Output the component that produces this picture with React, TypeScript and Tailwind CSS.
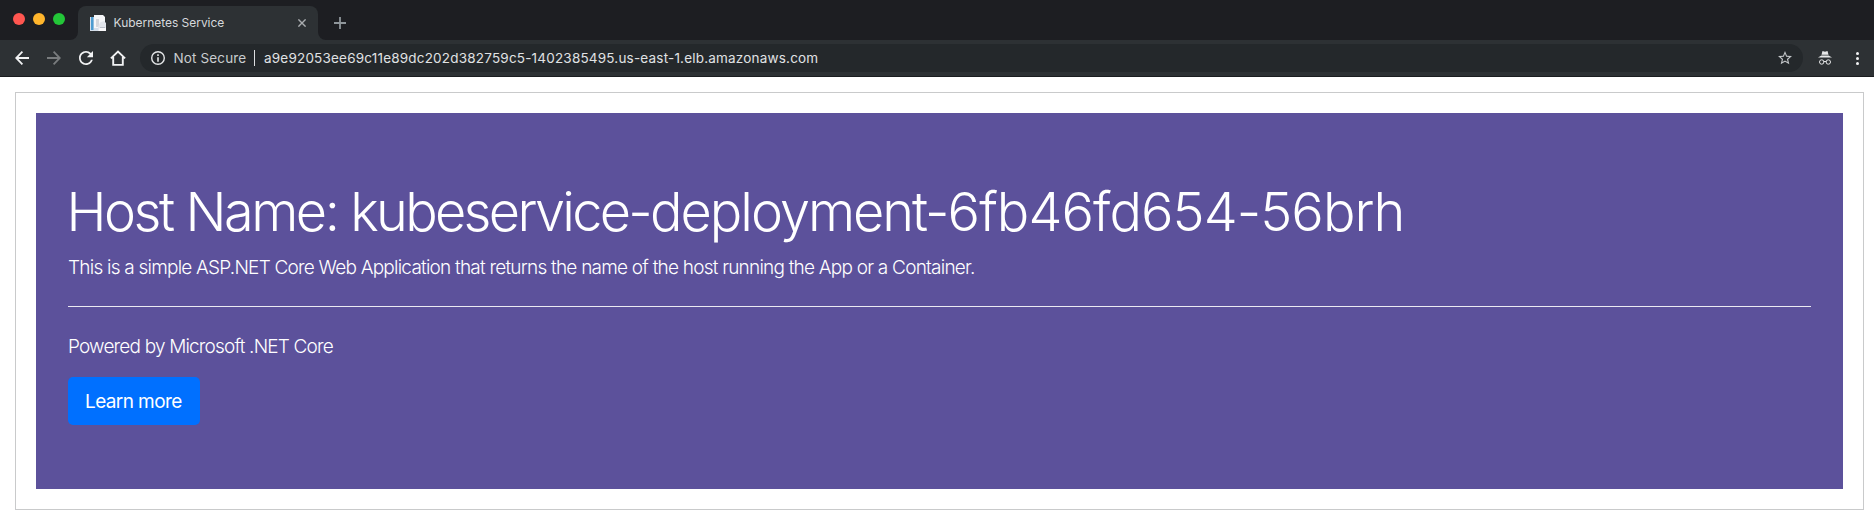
import type { ReactNode } from "react";

function Icon({ box, className, children }: { box: string; className: string; children: ReactNode }) {
  return (
    <svg viewBox={box} className={`shrink-0 ${className}`} fill="none" stroke="currentColor">
      {children}
    </svg>
  );
}

function TabStrip() {
  return (
    <div className="flex h-10 items-start bg-[#1d1e22]">
      <div className="flex gap-2 pt-[13px] pl-[13px]">
        <span className="size-3 rounded-full bg-[#ff5650]" />
        <span className="size-3 rounded-full bg-[#ffb52c]" />
        <span className="size-3 rounded-full bg-[#23c638]" />
      </div>
      <div className="mt-[6px] ml-[5px] flex h-[34px] items-end">
        <svg viewBox="0 0 8 8" className="size-2 fill-[#2d3134]">
          <path d="M8 0V8H0A8 8 0 0 0 8 0Z" />
        </svg>
        <div className="flex h-[34px] w-60 items-center rounded-t-lg bg-[#2d3134] pl-3">
          <svg viewBox="0 0 16 16" className="size-4 shrink-0">
            <path d="M0 2H9V16H0Z" fill="#d3dde9" />
            <path d="M1 2H3.5V15H1Z" fill="#4b9bd0" />
            <path d="M4 0H13L15 2V13H4Z" fill="#f5f6f8" />
            <path d="M6 4H9V12H6Z" fill="#d4d7dd" />
            <path d="M10 7.500L14 6L16 8V15.500H8V12Z" fill="#e2e5ec" />
            <path d="M9.500 13H16V16H8.500Z" fill="#f8f8fa" />
            <path d="M10 12.500H15" stroke="#a9afbc" strokeWidth="0.7" />
          </svg>
          <span className="ml-[7.500px] w-[184px] text-[12px] leading-4 tracking-[-0.03px] text-[#d6d9dc]">Kubernetes Service</span>
          <Icon box="0 0 8 8" className="size-2 text-[#a9acaf]">
            <path d="M0.400 0.400L7.600 7.600M7.600 0.400L0.400 7.600" strokeWidth="1.400" />
          </Icon>
        </div>
        <svg viewBox="0 0 8 8" className="size-2 fill-[#2d3134]">
          <path d="M0 0V8H8A8 8 0 0 1 0 0Z" />
        </svg>
      </div>
      <Icon box="0 0 12 12" className="mt-[17px] ml-2 size-3 text-[#8f969b]">
        <path d="M6 0V12M0 6H12" strokeWidth="1.800" />
      </Icon>
    </div>
  );
}

function Toolbar() {
  return (
    <div className="flex h-[37px] items-center border-b border-[#1a1c1f] bg-[#2d3134] pl-[15px]">
      <Icon box="0 0 14 14" className="size-[14px] text-[#f1f2f3]">
        <path d="M14 7H1.500M7.400 0.700L1.200 7L7.400 13.300" strokeWidth="1.800" />
      </Icon>
      <Icon box="0 0 14 14" className="ml-[18px] size-[14px] text-[#797c7e]">
        <path d="M0 7H12.500M6.600 0.700L12.800 7L6.600 13.300" strokeWidth="1.800" />
      </Icon>
      <svg viewBox="4 4 16 16" className="ml-[18px] size-[14px] shrink-0 fill-[#f1f2f3]">
        <path d="M17.650 6.350C16.200 4.900 14.210 4 12 4c-4.420 0-7.990 3.580-7.990 8s3.570 8 7.990 8c3.730 0 6.840-2.550 7.730-6h-2.080c-.82 2.330-3.040 4-5.650 4-3.310 0-6-2.690-6-6s2.690-6 6-6c1.660 0 3.140.69 4.220 1.780L13 11h7V4l-2.350 2.350z" />
      </svg>
      <Icon box="0 0 16 16" className="ml-[17px] size-4 text-[#f1f2f3]">
        <path d="M0.900 8.400L8 1.500L15.100 8.400M3.200 7V14.900H12.800V7" strokeWidth="1.900" />
      </Icon>
      <div className="ml-[14px] flex h-7 w-[1663px] items-center rounded-full bg-[#24282b] pr-[11px] pl-[11px] text-[13.5px] leading-5">
        <Icon box="0 0 14 14" className="size-[14px] text-[#e3e5e7]">
          <circle cx="7" cy="7" r="6.300" strokeWidth="1.400" />
          <path d="M7 3.300V4.900M7 6.200V10.800" strokeWidth="1.600" />
        </Icon>
        <span className="ml-[8.500px] w-[80px] tracking-[0.14px] text-[#c9cccf]">Not Secure</span>
        <span className="h-4 w-px bg-[#dcdee0]" />
        <span className="ml-[9.500px] flex-1 tracking-[0.195px] text-[#e0e2e4]">
          a9e92053ee69c11e89dc202d382759c5-1402385495.us-east-1.elb.amazonaws.com
        </span>
        <svg viewBox="2 2 20 19" className="h-[13.300px] w-[14px] shrink-0 fill-[#c3c6c9]">
          <path d="M22 9.240l-7.190-.62L12 2 9.190 8.630 2 9.240l5.460 4.730L5.820 21 12 17.270 18.180 21l-1.630-7.030L22 9.240zM12 15.400l-3.760 2.270 1-4.280-3.320-2.880 4.380-.38L12 6.100l1.710 4.040 4.380.38-3.320 2.880 1 4.280L12 15.400z" />
        </svg>
      </div>
      <Icon box="0 0 14 14" className="ml-[15px] size-[14px] text-[#e6e7e8]">
        <path d="M4.500 0L7 0.700L9.500 0L10.500 3.700H3.500Z" fill="currentColor" stroke="none" />
        <path d="M3.300 4.500H10.700L14 6.500H0Z" fill="currentColor" stroke="none" />
        <circle cx="3.700" cy="11" r="2.200" strokeWidth="1" />
        <circle cx="10.300" cy="11" r="2.200" strokeWidth="1" />
        <path d="M5.800 10.700Q7 10 8.200 10.700" strokeWidth="1" />
      </Icon>
      <div className="ml-6 flex flex-col gap-[2px]">
        <span className="size-[3px] rounded-full bg-[#f1f2f3]" />
        <span className="size-[3px] rounded-full bg-[#f1f2f3]" />
        <span className="size-[3px] rounded-full bg-[#f1f2f3]" />
      </div>
    </div>
  );
}

export default function App() {
  return (
    <div className="h-[522px] w-[1874px] overflow-hidden bg-white font-[Inter,sans-serif]">
      <TabStrip />
      <Toolbar />
      <main className="mt-[15px] mr-[10px] ml-[15px] h-[418px] border border-[#c9cacb] p-5">
        <section className="h-[376px] bg-[#5c519b] px-8 pt-[65px] text-white">
          <h1 className="-ml-[1.500px] text-[54px] leading-[67px] font-light tracking-[-0.92px] whitespace-nowrap">
            <span className="tracking-[-2.45px]">Host Name: </span>
            <span className="tracking-[-2.69px]">kubeservice-</span>
            <span className="tracking-[-2.01px]">deployment-</span>
            6fb46fd654-56brh
          </h1>
          <p className="mt-[8px] text-[19px] leading-[30px] font-light tracking-[-0.775px]">
            This is a simple ASP.NET Core Web Application that returns the name of the host running the App or a Container.
          </p>
          <hr className="mt-[23px] border-t border-[#ebeaf2]" />
          <p className="mt-[25px] text-[19px] leading-[30px] font-light tracking-[-0.82px]">Powered by Microsoft .NET Core</p>
          <a href="#" className="mt-[15px] flex h-12 w-[132px] items-center rounded-[5px] bg-[#0070ff] pt-[2px] pl-[17px] text-[19px] tracking-[-0.6px]">
            Learn more
          </a>
        </section>
      </main>
    </div>
  );
}
